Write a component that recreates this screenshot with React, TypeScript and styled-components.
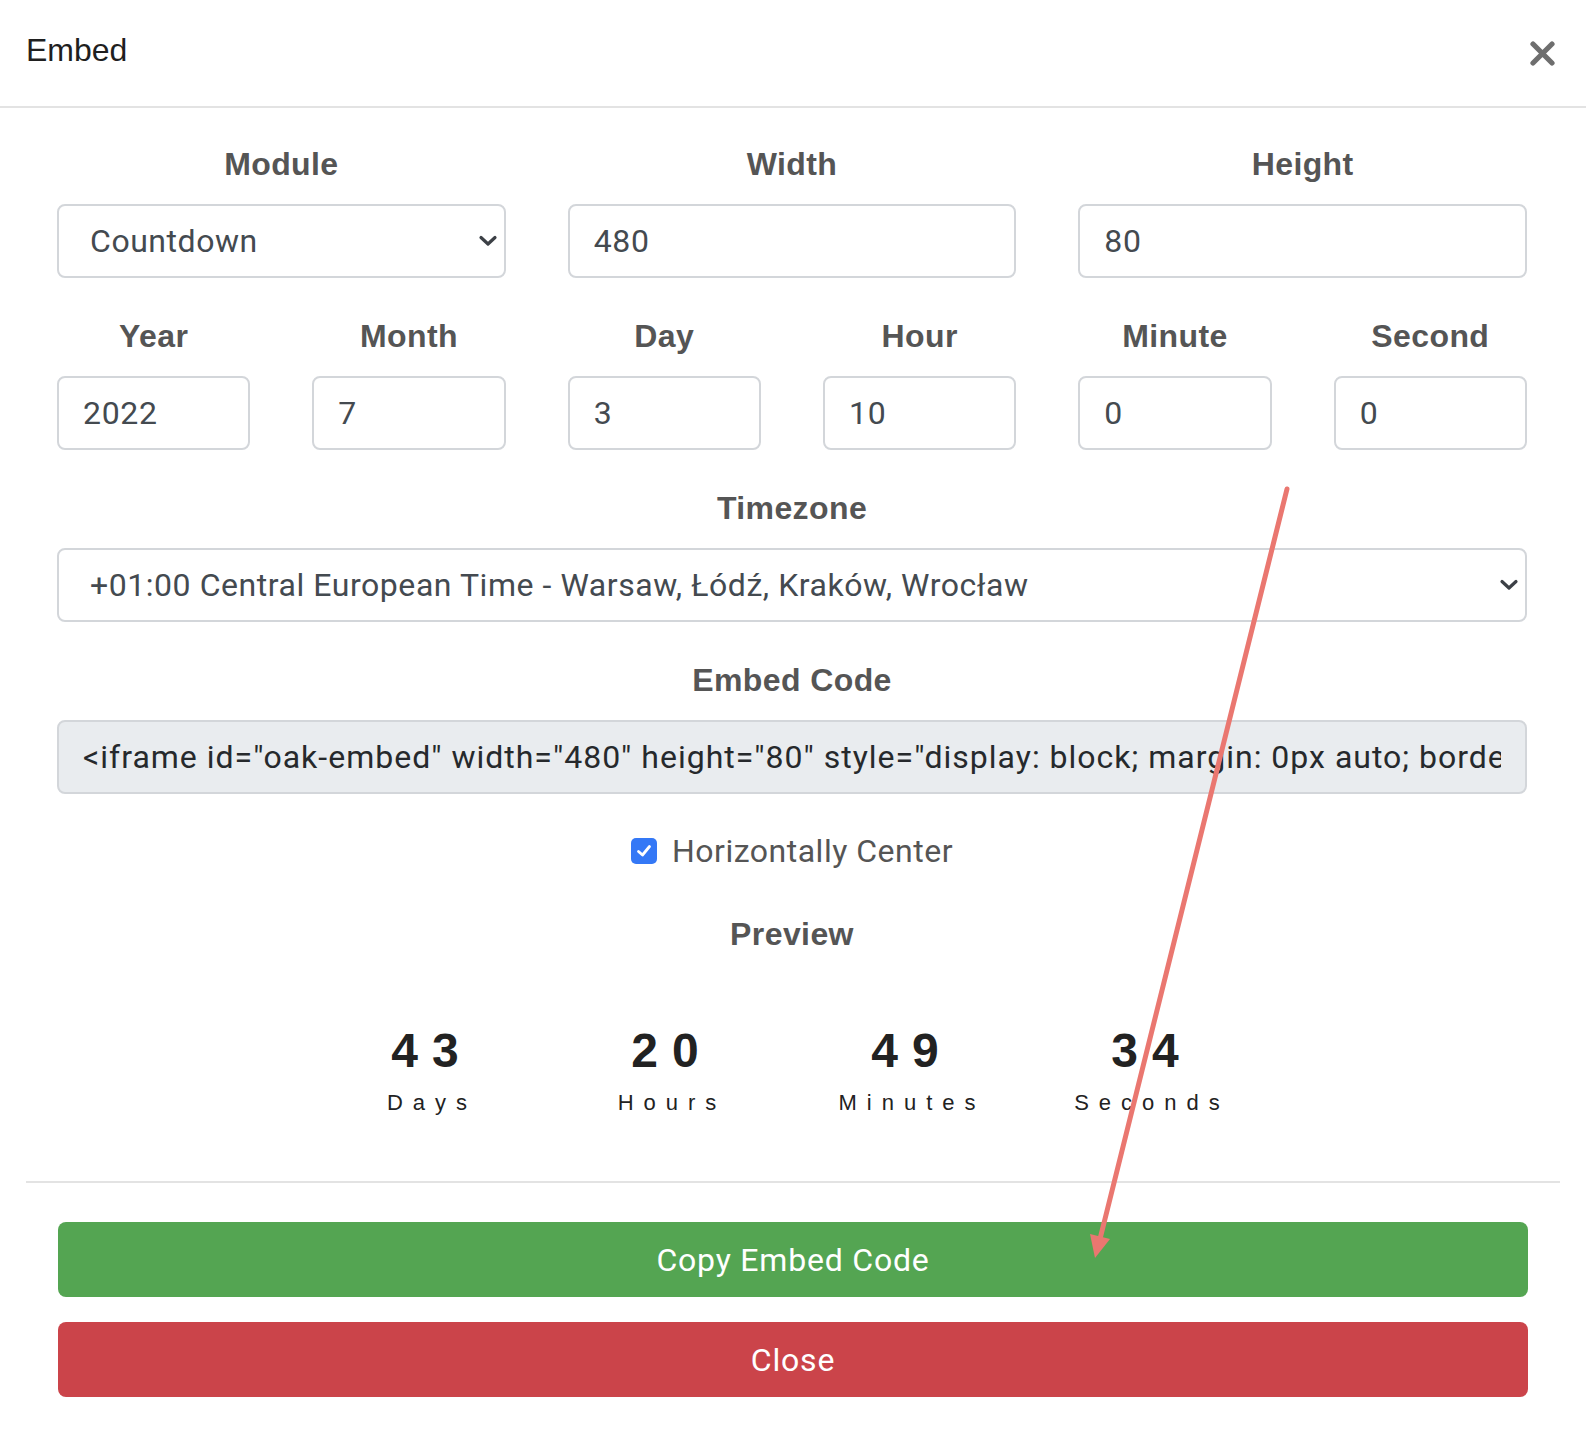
import React from "react";
import styled, { createGlobalStyle } from "styled-components";

const Global = createGlobalStyle`
  html, body { margin: 0; padding: 0; background: #fff; }
  body { font-family: Roboto, "Liberation Sans", Arial, sans-serif; }
  * { box-sizing: border-box; }
`;

const Page = styled.div`
  position: relative;
  width: 1586px;
  height: 1450px;
  overflow: hidden;
  background: #fff;
`;

const Header = styled.div`
  height: 108px;
  border-bottom: 2px solid #e3e3e3;
  display: flex;
  align-items: center;
  justify-content: space-between;
  padding: 0 31px 0 26px;
`;

const Title = styled.h5`
  margin: 0 0 6px 0;
  font-family: "Liberation Sans", Arial, sans-serif;
  font-weight: 400;
  font-size: 32px;
  color: #1f1f1f;
`;

const CloseX = styled.button`
  border: 0;
  background: none;
  padding: 0;
  width: 25px;
  height: 25px;
  display: flex;
  cursor: pointer;
`;

const Body = styled.div`
  padding: 38px 59px 0 57px;
  display: flex;
  flex-direction: column;
`;

const Grid = styled.div<{ $cols: number }>`
  display: grid;
  grid-template-columns: repeat(${(p) => p.$cols}, 1fr);
  column-gap: 62px;
  margin-bottom: 40px;
`;

const Field = styled.div`
  display: flex;
  flex-direction: column;
  align-items: stretch;
`;

const Label = styled.label`
  display: block;
  text-align: center;
  font-family: "Liberation Sans", Arial, sans-serif;
  font-weight: 700;
  font-size: 32px;
  letter-spacing: 0.4px;
  line-height: 37px;
  color: #555;
  margin-bottom: 21px;
`;

const Input = styled.input<{ $readonly?: boolean }>`
  height: 74px;
  width: 100%;
  border: 2px solid #d3d6da;
  border-radius: 8px;
  padding: 0 24px;
  font-family: Roboto, "Liberation Sans", sans-serif;
  font-size: 32px;
  letter-spacing: ${(p) => (p.$readonly ? "1px" : "0.7px")};
  color: ${(p) => (p.$readonly ? "#26292c" : "#444a50")};
  background: ${(p) => (p.$readonly ? "#e9ecef" : "#fff")};
  outline: none;
  text-overflow: clip;
`;

const SelectBox = styled.div`
  height: 74px;
  border: 2px solid #d3d6da;
  border-radius: 8px;
  padding: 0 6px 0 31px;
  display: flex;
  align-items: center;
  justify-content: space-between;
  font-family: Roboto, "Liberation Sans", sans-serif;
  font-size: 32px;
  letter-spacing: 0.55px;
  color: #444a50;
  background: #fff;
`;

const CheckRow = styled.div`
  display: flex;
  justify-content: center;
  align-items: center;
  gap: 15px;
  height: 37px;
  margin: -2px 0 47px;
  font-family: Roboto, "Liberation Sans", sans-serif;
  font-size: 32px;
  letter-spacing: 0.5px;
  color: #555;
`;

const CheckBox = styled.span`
  width: 26px;
  height: 26px;
  border-radius: 5px;
  background: #3478f6;
  display: flex;
  align-items: center;
  justify-content: center;
`;

const Preview = styled.div`
  width: 960px;
  margin: 48px auto 0;
  display: grid;
  grid-template-columns: repeat(4, 1fr);
`;

const Unit = styled.div`
  display: flex;
  flex-direction: column;
  align-items: center;
  font-family: "Liberation Sans", Arial, sans-serif;
  color: #222;
`;

const Num = styled.div`
  font-weight: 700;
  font-size: 48px;
  line-height: 58px;
  letter-spacing: 14px;
  margin-bottom: 10px;
`;

const UnitLabel = styled.div`
  font-size: 22px;
  line-height: 26px;
  letter-spacing: 10px;
`;

const Footer = styled.div`
  margin: 65px 26px 0;
  border-top: 2px solid #e3e3e3;
  padding: 39px 32px 0 32px;
  display: flex;
  flex-direction: column;
  gap: 25px;
`;

const Btn = styled.button<{ $variant: "success" | "danger" }>`
  height: 75px;
  width: 100%;
  border: 0;
  border-radius: 8px;
  background: ${(p) => (p.$variant === "success" ? "#54a552" : "#cb444a")};
  color: #fff;
  font-family: Roboto, "Liberation Sans", sans-serif;
  font-size: 32px;
  letter-spacing: 0.8px;
  cursor: pointer;
`;

const Overlay = styled.svg`
  position: absolute;
  left: 0;
  top: 0;
  pointer-events: none;
`;

const Chevron = () => (
  <svg width="20" height="12" viewBox="0 0 20 12">
    <path d="M3 2.5 L10 9 L17 2.5" fill="none" stroke="#3c4046" strokeWidth="3.2" strokeLinecap="round" strokeLinejoin="round" />
  </svg>
);

const embed =
  '<iframe id="oak-embed" width="480" height="80" style="display: block; margin: 0px auto; border: 0px;" src="https://oak.embed/countdown"></iframe>';

export default function App() {
  const dateFields: [string, string][] = [
    ["Year", "2022"],
    ["Month", "7"],
    ["Day", "3"],
    ["Hour", "10"],
    ["Minute", "0"],
    ["Second", "0"],
  ];
  const units: [string, string][] = [
    ["43", "Days"],
    ["20", "Hours"],
    ["49", "Minutes"],
    ["34", "Seconds"],
  ];
  return (
    <Page>
      <Global />
      <Header>
        <Title>Embed</Title>
        <CloseX aria-label="Close">
          <svg width="25" height="25" viewBox="0 0 25 25">
            <path d="M3 3 L22 22 M22 3 L3 22" stroke="#6e6e6e" strokeWidth="5.2" strokeLinecap="round" />
          </svg>
        </CloseX>
      </Header>
      <Body>
        <Grid $cols={3}>
          <Field>
            <Label>Module</Label>
            <SelectBox>
              <span>Countdown</span>
              <Chevron />
            </SelectBox>
          </Field>
          <Field>
            <Label>Width</Label>
            <Input readOnly value="480" />
          </Field>
          <Field>
            <Label>Height</Label>
            <Input readOnly value="80" />
          </Field>
        </Grid>
        <Grid $cols={6}>
          {dateFields.map(([l, v]) => (
            <Field key={l}>
              <Label>{l}</Label>
              <Input readOnly value={v} />
            </Field>
          ))}
        </Grid>
        <Grid $cols={1}>
          <Field>
            <Label>Timezone</Label>
            <SelectBox>
              <span>+01:00 Central European Time - Warsaw, Łódź, Kraków, Wrocław</span>
              <Chevron />
            </SelectBox>
          </Field>
        </Grid>
        <Grid $cols={1}>
          <Field>
            <Label>Embed Code</Label>
            <Input readOnly $readonly value={embed} />
          </Field>
        </Grid>
        <CheckRow>
          <CheckBox>
            <svg width="18" height="18" viewBox="0 0 18 18">
              <path d="M3.5 9.5 L7.5 13 L14.5 4.5" fill="none" stroke="#fff" strokeWidth="2.8" strokeLinecap="round" strokeLinejoin="round" />
            </svg>
          </CheckBox>
          <span>Horizontally Center</span>
        </CheckRow>
        <Label as="div">Preview</Label>
        <Preview>
          {units.map(([n, l]) => (
            <Unit key={l}>
              <Num>{n}</Num>
              <UnitLabel>{l}</UnitLabel>
            </Unit>
          ))}
        </Preview>
      </Body>
      <Footer>
        <Btn $variant="success">Copy Embed Code</Btn>
        <Btn $variant="danger">Close</Btn>
      </Footer>
      <Overlay width="1586" height="1450" viewBox="0 0 1586 1450">
        <line x1="1287" y1="489" x2="1099" y2="1243" stroke="#ea7770" strokeWidth="5" strokeLinecap="round" />
        <polygon points="1095,1258 1110,1239 1090,1234" fill="#ea7770" />
      </Overlay>
    </Page>
  );
}
